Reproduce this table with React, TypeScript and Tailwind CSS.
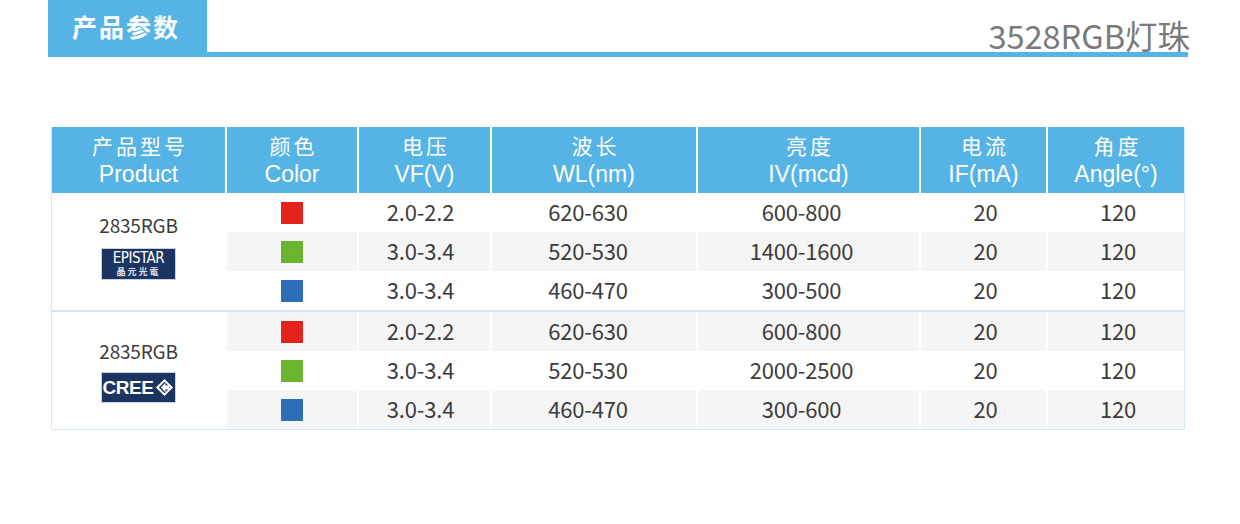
import React from 'react';

type Row = { color: string; vf: string; wl: string; iv: string; ifa: string; angle: string };

const cols = ['w-[173px]', 'w-[130px]', 'w-[131px]', 'w-[204px]', 'w-[221px]', 'w-[125px]', 'flex-1'];

// slight offsets of the values inside their cells, as in the picture
const shifts = ['pr-[8px]', 'pr-[12px]', 'pr-[14px]', 'pl-[4px]', 'pl-[4px]'];

const headers = [
  ['产品型号', 'Product'],
  ['颜色', 'Color'],
  ['电压', 'VF(V)'],
  ['波长', 'WL(nm)'],
  ['亮度', 'IV(mcd)'],
  ['电流', 'IF(mA)'],
  ['角度', 'Angle(°)'],
];

const groupA: Row[] = [
  { color: 'bg-[#e3221c]', vf: '2.0-2.2', wl: '620-630', iv: '600-800', ifa: '20', angle: '120' },
  { color: 'bg-[#6ab42f]', vf: '3.0-3.4', wl: '520-530', iv: '1400-1600', ifa: '20', angle: '120' },
  { color: 'bg-[#2f6db6]', vf: '3.0-3.4', wl: '460-470', iv: '300-500', ifa: '20', angle: '120' },
];

const groupB: Row[] = [
  { color: 'bg-[#e3221c]', vf: '2.0-2.2', wl: '620-630', iv: '600-800', ifa: '20', angle: '120' },
  { color: 'bg-[#6ab42f]', vf: '3.0-3.4', wl: '520-530', iv: '2000-2500', ifa: '20', angle: '120' },
  { color: 'bg-[#2f6db6]', vf: '3.0-3.4', wl: '460-470', iv: '300-600', ifa: '20', angle: '120' },
];

const EpistarLogo = () => (
  <div className="w-[75px] h-[32px] bg-[#1c3461] border border-[#c9d2df] flex flex-col items-center justify-center">
    <span className="text-white text-[15px] leading-[15px] tracking-[-0.5px] font-['DejaVu_Sans_Condensed','Liberation_Sans',sans-serif]">
      EPISTAR
    </span>
    <span className="text-[#dfe4ee] text-[9px] leading-[11px] tracking-[2px] font-bold font-['Noto_Sans_CJK_TC',sans-serif]">
      晶元光電
    </span>
  </div>
);

const CreeLogo = () => (
  <div className="w-[75px] h-[31px] bg-[#1c3461] border border-[#c9d2df] flex items-center justify-center gap-[2px]">
    <span className="text-white text-[19px] leading-none font-black tracking-[-0.5px] font-['Liberation_Sans',sans-serif]">
      CREE
    </span>
    <svg width="19" height="19" viewBox="0 0 20 20">
      <polygon points="10,1 19,10 10,19 1,10" fill="#ffffff" />
      <polygon points="10,4 16,10 10,16 4,10" fill="#1c3461" />
      <polygon points="6,10 11,5 11,8 15,8 15,12 11,12 11,15" fill="#ffffff" />
    </svg>
  </div>
);

const Group = ({
  rows,
  logo,
  last,
  stripeOdd,
  lift,
}: {
  rows: Row[];
  logo: React.ReactNode;
  last?: boolean;
  stripeOdd: boolean;
  lift?: boolean;
}) => (
  <div className={`flex ${last ? '' : 'border-b-2 border-[#d3e8f6]'}`}>
    <div
      className={`${cols[0]} flex flex-col items-center justify-center ${lift ? 'gap-[13px] pb-[8px]' : 'gap-[11px] pt-[2px]'}`}
    >
      <span className="text-[19px] leading-[20px] text-[#3c3c3c] tracking-[-0.2px]">2835RGB</span>
      {logo}
    </div>
    <div className="flex-1 flex flex-col">
      {rows.map((r, i) => {
        const gray = stripeOdd ? i % 2 === 1 : i % 2 === 0;
        const bg = gray ? 'bg-[#f5f5f5]' : 'bg-white';
        const cells = [r.vf, r.wl, r.iv, r.ifa, r.angle];
        return (
          <div key={i} className="flex h-[39px] gap-[2px] pl-[2px]">
            <div className={`${cols[1]} ${bg} flex items-center justify-center`}>
              <div className={`w-[22px] h-[22px] ${r.color}`} />
            </div>
            {cells.map((c, j) => (
              <div
                key={j}
                className={`${cols[j + 2]} ${bg} ${shifts[j]} flex items-center justify-center text-[22px] text-[#3c3c3c] tracking-[-0.2px] pb-[2px]`}
              >
                {c}
              </div>
            ))}
          </div>
        );
      })}
    </div>
  </div>
);

export default function App() {
  return (
    <div className="w-[1240px] h-[524px] bg-white font-['Noto_Sans_CJK_SC','Noto_Sans',sans-serif]">
      <div className="ml-[48px] w-[1140px] flex items-end justify-between border-b-[5px] border-[#56b3e6]">
        <div className="w-[159px] h-[52px] bg-[#56b3e6] flex items-center justify-center pr-[3px]">
          <span className="text-white text-[25px] font-bold tracking-[2px] leading-none">产品参数</span>
        </div>
        <span className="text-[#7a7a7a] text-[32.5px] leading-none pb-[1px] mr-[-2px]">3528RGB灯珠</span>
      </div>

      <div className="ml-[51px] mt-[70px] w-[1134px] border-x border-b border-[#d3e8f6]">
        <div className="flex h-[66px] gap-[2px] bg-white">
          {headers.map(([zh, en], i) => (
            <div
              key={i}
              className={`${cols[i]} bg-[#56b3e6] flex flex-col items-center justify-center text-white text-[21px] leading-[29px]`}
            >
              <span className="tracking-[3px] pl-[3px]">{zh}</span>
              <span className="font-['Liberation_Sans',sans-serif] text-[23px]">{en}</span>
            </div>
          ))}
        </div>
        <Group rows={groupA} logo={<EpistarLogo />} stripeOdd lift />
        <Group rows={groupB} logo={<CreeLogo />} stripeOdd={false} last />
      </div>
    </div>
  );
}
